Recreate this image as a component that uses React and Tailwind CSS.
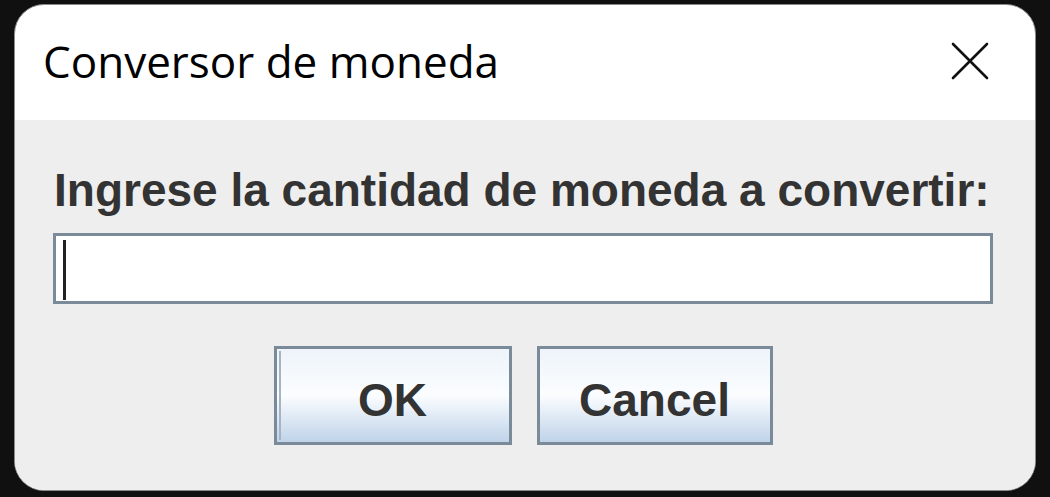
import React from "react";

function CloseIcon() {
  return (
    <svg width="38" height="38" viewBox="0 0 38 38" fill="none">
      <path d="M2 2 L36 36 M36 2 L2 36" stroke="#111" strokeWidth="2.6" strokeLinecap="round" />
    </svg>
  );
}

export default function App() {
  return (
    <div className="w-[1050px] h-[497px] bg-[#101010] pt-[4px] pl-[14px] pr-[14px] pb-[6px]">
      <div className="h-[487px] rounded-[30px] border border-[#8a8a8a] bg-white overflow-hidden flex flex-col">
        {/* title bar */}
        <div className="h-[115px] flex items-center justify-between pl-[28px] pr-[46px] shrink-0">
          <span
            className="text-[44px] text-black leading-none mt-[-4px]"
            style={{ fontFamily: '"Open Sans", "Noto Sans", sans-serif' }}
          >
            Conversor de moneda
          </span>
          <div className="mt-[-4px]">
            <CloseIcon />
          </div>
        </div>

        {/* content */}
        <div
          className="flex-1 bg-[#eeeeee] flex flex-col pl-[38px] pr-[42px] pt-[47px]"
          style={{ fontFamily: '"Liberation Sans", Arial, sans-serif' }}
        >
          <div className="text-[46px] font-bold text-[#333333] leading-none ml-[1px] whitespace-nowrap">
            Ingrese la cantidad de moneda a convertir:
          </div>
          <div className="mt-[20px] h-[71px] bg-white border-[3px] border-[#7a8a99] relative">
            <div className="absolute left-[7px] top-[4px] bottom-[1px] w-[3px] bg-[#222]" />
          </div>
          <div className="mt-[42px] flex justify-center gap-[25px]">
            <button className="w-[238px] h-[99px] pt-[8px] border-[3px] border-[#7a8a99] bg-gradient-to-b from-[#eef4fa] via-[#fbfdff] to-[#bfd3e9] flex items-center justify-center relative">
              <span className="absolute left-[2px] top-[2px] bottom-[2px] w-[2px] bg-[#a4b4c4]" />
              <span className="text-[46px] font-bold text-[#333333] leading-none">OK</span>
            </button>
            <button className="w-[236px] h-[99px] pt-[8px] border-[3px] border-[#7a8a99] bg-gradient-to-b from-[#eef4fa] via-[#fbfdff] to-[#bfd3e9] flex items-center justify-center">
              <span className="text-[46px] font-bold text-[#333333] leading-none">Cancel</span>
            </button>
          </div>
        </div>
      </div>
    </div>
  );
}
